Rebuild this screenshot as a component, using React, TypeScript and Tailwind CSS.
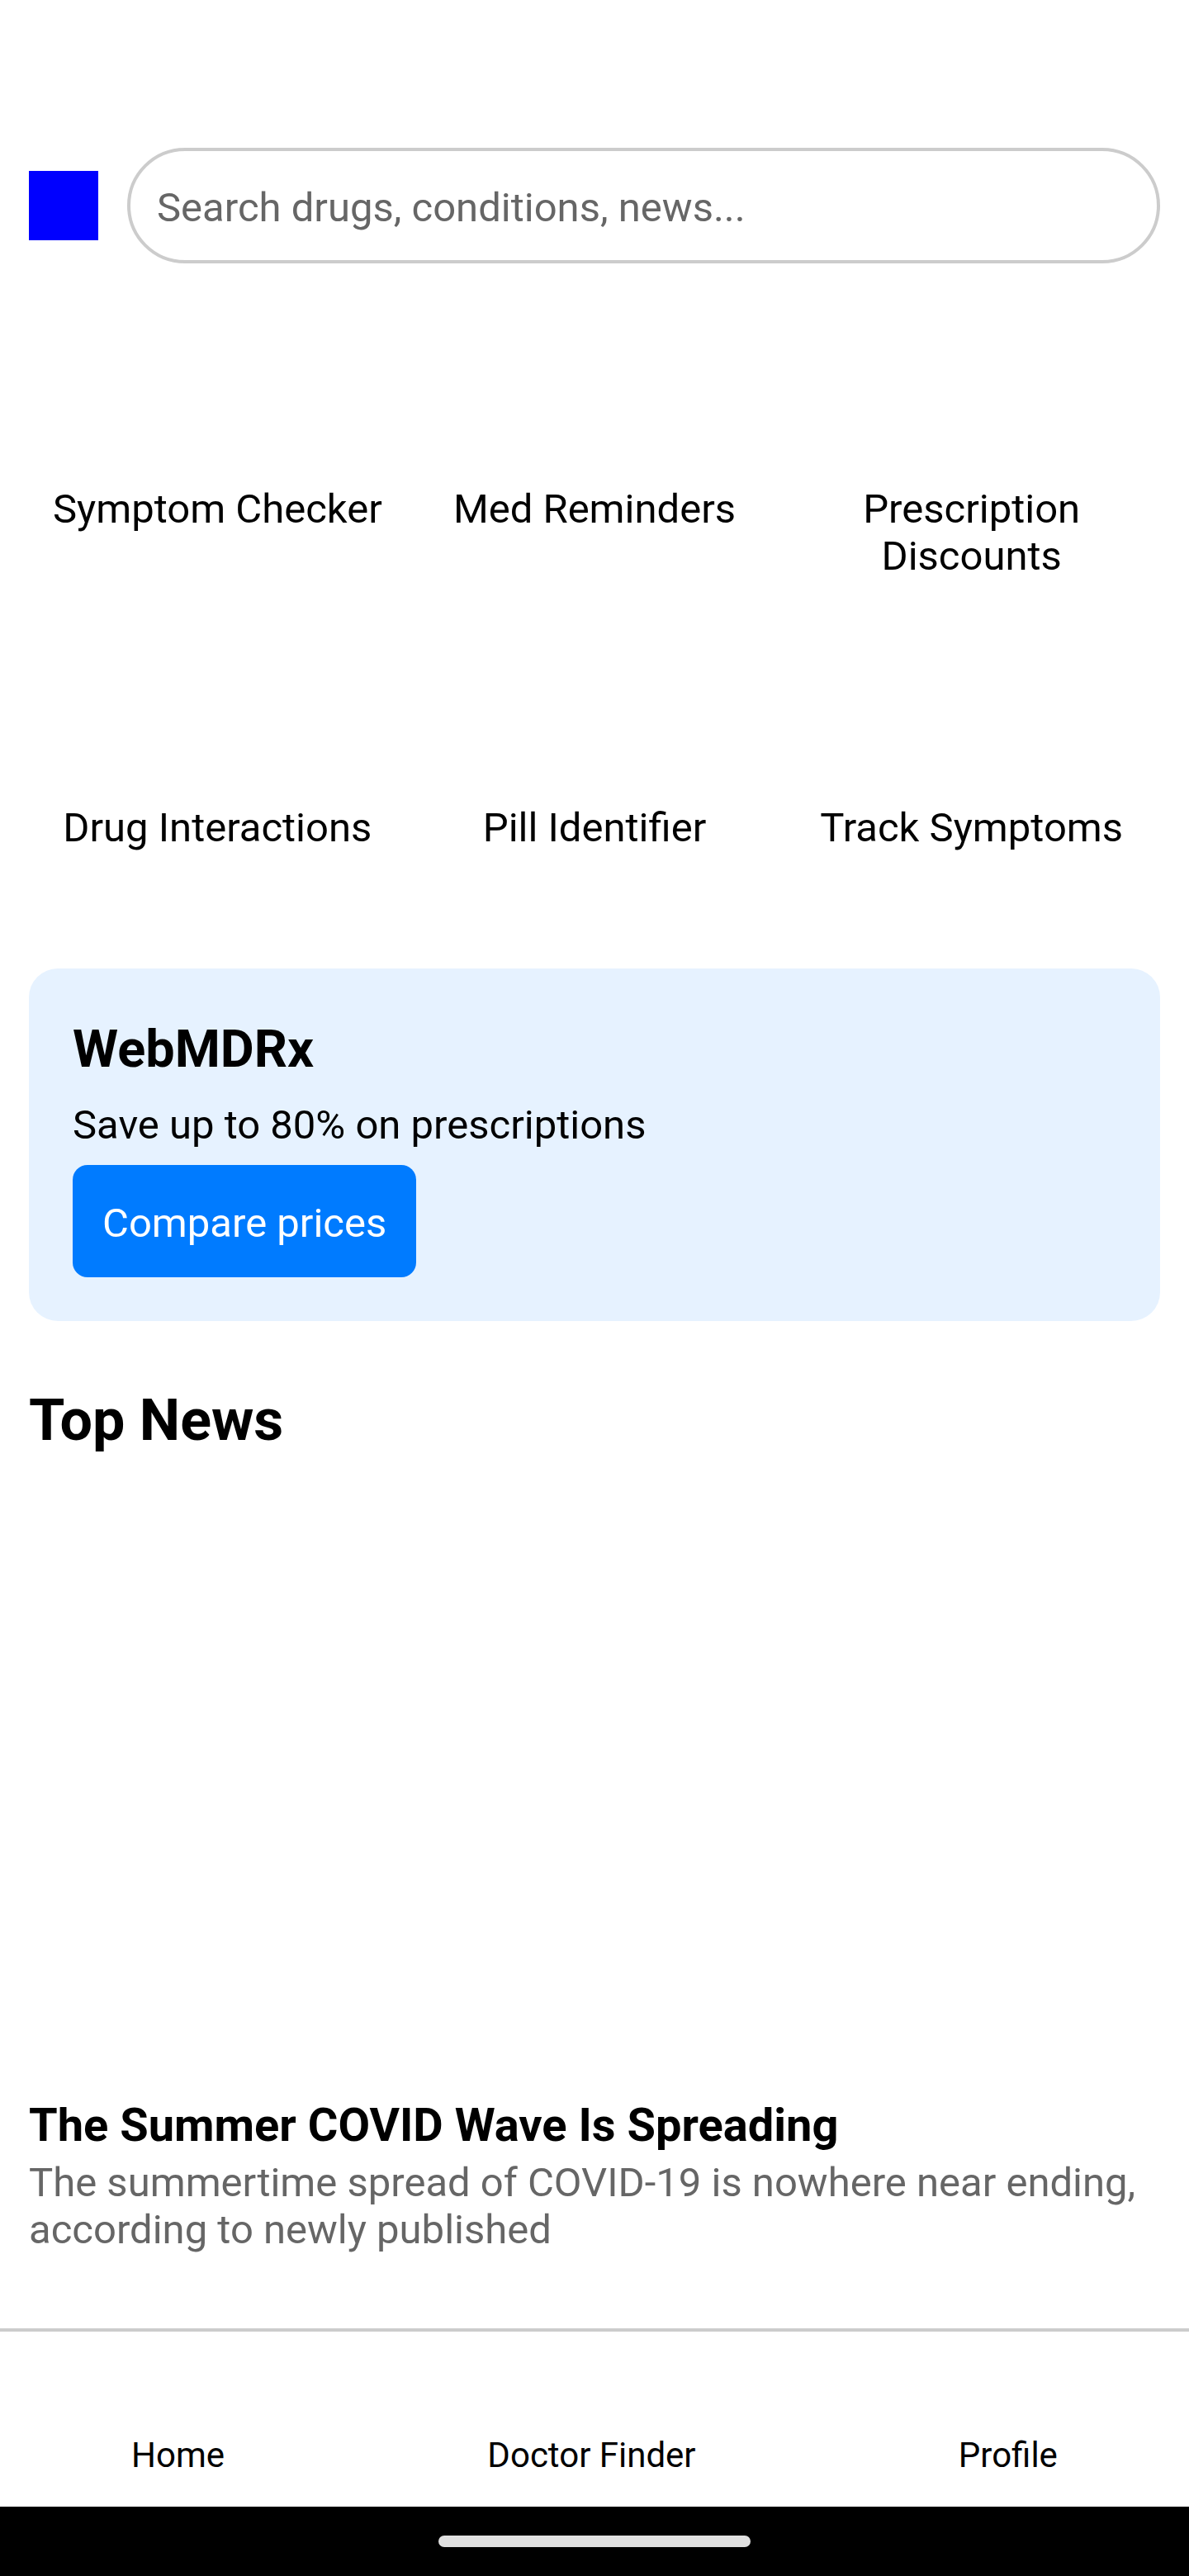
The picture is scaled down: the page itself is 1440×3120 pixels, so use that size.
import React from "react";

const tools = [
  "Symptom Checker",
  "Med Reminders",
  "Prescription Discounts",
  "Drug Interactions",
  "Pill Identifier",
  "Track Symptoms",
];

const tabs = ["Home", "Doctor Finder", "Profile"];

export default function App() {
  return (
    <div className="flex min-h-screen flex-col bg-white font-['Roboto',sans-serif] text-[49px] leading-[57px] text-black">
      <header className="flex items-center gap-[35px] px-[35px] pt-[179px]">
        <div className="size-[84px] shrink-0 bg-[#0000ff]" />
        <input
          type="search"
          aria-label="Search"
          placeholder="Search drugs, conditions, news..."
          className="h-[140px] min-w-0 flex-1 rounded-full border-4 border-[#cccccc] px-8 pt-1 outline-none placeholder:text-[#666666]"
        />
      </header>
      <main className="flex flex-1 flex-col px-[35px] pb-[90px]">
        <section className="grid grid-cols-3 gap-y-[73px] pt-[70px]">
          {tools.map((tool) => (
            <button key={tool} type="button" className="flex flex-col items-center justify-start px-4 pt-[199px] text-center">
              {tool}
            </button>
          ))}
        </section>
        <section className="mt-[142px] rounded-[35px] bg-[#e6f2ff] p-[53px]">
          <h2 className="text-[63px] leading-[90px] font-bold">WebMDRx</h2>
          <p className="pt-[18px]">Save up to 80% on prescriptions</p>
          <button type="button" className="mt-5 block h-[136px] rounded-[18px] bg-[#007bff] px-9 pt-1 text-white">
            Compare prices
          </button>
        </section>
        <section className="pt-[79px]">
          <h2 className="text-[70px] leading-[82px] font-bold">Top News</h2>
          <article className="pt-[780px]">
            <h3 className="text-[56px] leading-[66px] font-bold">The Summer COVID Wave Is Spreading</h3>
            <p className="pt-2 text-[#666666]">
              The summertime spread of COVID-19 is nowhere near ending, according to newly published
            </p>
          </article>
        </section>
      </main>
      <nav className="flex justify-around border-t-4 border-[#cccccc] pt-[125px] pb-[37px] text-[42px] leading-[50px]">
        {tabs.map((tab) => (
          <button key={tab} type="button">
            {tab}
          </button>
        ))}
      </nav>
      <footer className="flex h-[84px] items-center justify-center bg-black">
        <div className="h-[14px] w-[378px] rounded-full bg-[#e0e0e0]" />
      </footer>
    </div>
  );
}
